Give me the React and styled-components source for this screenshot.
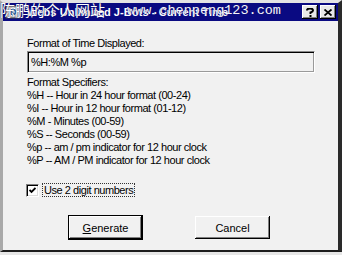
import React from "react";
import styled, { createGlobalStyle } from "styled-components";

const Global = createGlobalStyle`
  html, body { margin: 0; padding: 0; background: #e6e6e6; }
  body { width: 342px; height: 255px; overflow: hidden; }
`;

const Window = styled.div`
  position: relative;
  width: 342px;
  height: 252px;
  box-sizing: border-box;
  background: #f1f1f1;
  border-top: 3px solid #e4e4e4;
  border-left: 3px solid #a9a9a9;
  border-right: 4px solid #2a2a2a;
  border-bottom: 2px solid #1c1c1c;
  display: flex;
  flex-direction: column;
  font-family: "Liberation Sans", Arial, sans-serif;
  font-size: 11px;
  color: #000;
`;

const TitleBar = styled.div`
  height: 18px;
  background: #0a0a82;
  display: flex;
  align-items: center;
  padding: 0 2px 0 2px;
  gap: 6px;
`;

const TitleText = styled.span`
  flex: 1;
  color: #fff;
  font-weight: bold;
  font-size: 11px;
  letter-spacing: 0.1px;
  white-space: nowrap;
`;

const CapButton = styled.div`
  width: 16px;
  height: 14px;
  box-sizing: border-box;
  background: #e8e8e8;
  box-shadow: inset -1px -1px #000, inset 1px 1px #fff, inset -2px -2px #808080;
  display: flex;
  align-items: center;
  justify-content: center;
  margin-left: ${(p) => (p.$gap ? p.$gap : 0)}px;
`;

const Body = styled.div`
  flex: 1;
  display: flex;
  flex-direction: column;
  padding: 16px 20px 0 24px;
`;

const Label = styled.div`
  height: 13px;
  line-height: 13px;
  letter-spacing: -0.45px;
  white-space: nowrap;
  margin-top: ${(p) => p.$mt || 0}px;
`;

const Field = styled.div`
  margin-top: 1px;
  width: 288px;
  height: 22px;
  box-sizing: border-box;
  background: #f1f1f1;
  border-top: 1px solid #8a8a8a;
  border-left: 1px solid #8a8a8a;
  border-right: 1px solid #fff;
  border-bottom: 1px solid #fff;
  box-shadow: inset 1px 1px #000, inset -1px -1px #9a9a9a;
  padding: 0 3px;
  display: flex;
  align-items: center;
  letter-spacing: -0.45px;
`;

const CheckRow = styled.div`
  margin-top: 16px;
  height: 14px;
  display: flex;
  align-items: center;
  gap: 3px;
  margin-left: -1px;
`;

const Box = styled.div`
  width: 13px;
  height: 13px;
  box-sizing: border-box;
  background: #fff;
  border-top: 1px solid #808080;
  border-left: 1px solid #808080;
  border-right: 1px solid #fff;
  border-bottom: 1px solid #fff;
  box-shadow: inset 1px 1px #000, inset -1px -1px #dcdcdc;
  display: flex;
  align-items: center;
  justify-content: center;
`;

const FocusLabel = styled.span`
  border: 1px dotted #333;
  padding: 0 1px;
  line-height: 12px;
  letter-spacing: -0.45px;
  white-space: nowrap;
`;

const ButtonRow = styled.div`
  margin-top: 18px;
  display: flex;
  align-items: center;
  padding-left: 41px;
  gap: 52px;
`;

const Button = styled.div`
  width: 75px;
  height: ${(p) => (p.$default ? 25 : 23)}px;
  box-sizing: border-box;
  background: #f1f1f1;
  border: ${(p) => (p.$default ? "1px solid #000" : "none")};
  box-shadow: inset -1px -1px #000, inset 1px 1px #fff, inset -2px -2px #808080;
  display: flex;
  align-items: center;
  justify-content: center;
  font-size: 11px;
`;

const Under = styled.span`
  text-decoration: underline;
`;

const Watermark = styled.div`
  position: absolute;
  top: -4px;
  left: -3px;
  width: 342px;
  height: 22px;
  pointer-events: none;
  display: flex;
  align-items: center;
  white-space: nowrap;
`;

const WmCjk = styled.span`
  font-family: "Noto Sans CJK SC", sans-serif;
  font-size: 15px;
  line-height: 18px;
  color: #fff;
  text-shadow: 0 0 1px #10104a;
`;

const WmUrl = styled.span`
  margin-left: 22px;
  font-family: "Liberation Mono", monospace;
  font-size: 13.5px;
  color: #f4f4ff;
  text-shadow: 0 0 1px #20205a;
`;

export default function App() {
  return (
    <>
      <Global />
      <Window>
        <TitleBar>
          <svg width="16" height="16" viewBox="0 0 16 16">
            <rect x="1" y="2" width="14" height="12" fill="#c0c0c0" stroke="#404040" />
            <circle cx="8" cy="8" r="4" fill="#3a6ea5" stroke="#fff" strokeWidth="1" />
            <path d="M8 5.5V8h2" stroke="#fff" strokeWidth="1" fill="none" />
          </svg>
          <TitleText>Webs Unlimited J-Bots - Current Time</TitleText>
          <CapButton>
            <svg width="8" height="9" viewBox="0 0 8 9">
              <path d="M1 2.5C1 1 2 0.5 4 0.5S7 1.5 7 2.5 6 4 4.5 4.5V6" stroke="#000" strokeWidth="2" fill="none" />
              <rect x="3.5" y="7" width="2" height="2" fill="#000" />
            </svg>
          </CapButton>
          <CapButton $gap={-4}>
            <svg width="8" height="7" viewBox="0 0 8 7">
              <path d="M0.5 0.5L7.5 6.5M7.5 0.5L0.5 6.5" stroke="#000" strokeWidth="1.8" />
            </svg>
          </CapButton>
        </TitleBar>
        <Body>
          <Label>Format of Time Displayed:</Label>
          <Field>%H:%M %p</Field>
          <Label $mt={3}>Format Specifiers:</Label>
          <Label>%H -- Hour in 24 hour format (00-24)</Label>
          <Label>%I -- Hour in 12 hour format (01-12)</Label>
          <Label>%M - Minutes (00-59)</Label>
          <Label>%S -- Seconds (00-59)</Label>
          <Label>%p -- am / pm indicator for 12 hour clock</Label>
          <Label>%P -- AM / PM indicator for 12 hour clock</Label>
          <CheckRow>
            <Box>
              <svg width="7" height="7" viewBox="0 0 7 7">
                <path d="M0.5 3L2.5 5L6.5 1" stroke="#000" strokeWidth="1.8" fill="none" />
              </svg>
            </Box>
            <FocusLabel>Use 2 digit numbers</FocusLabel>
          </CheckRow>
          <ButtonRow>
            <Button $default>
              <span><Under>G</Under>enerate</span>
            </Button>
            <Button>Cancel</Button>
          </ButtonRow>
        </Body>
        <Watermark>
          <WmCjk>陈鹏的个人网站</WmCjk>
          <WmUrl>www.chenpeng123.com</WmUrl>
        </Watermark>
      </Window>
    </>
  );
}
